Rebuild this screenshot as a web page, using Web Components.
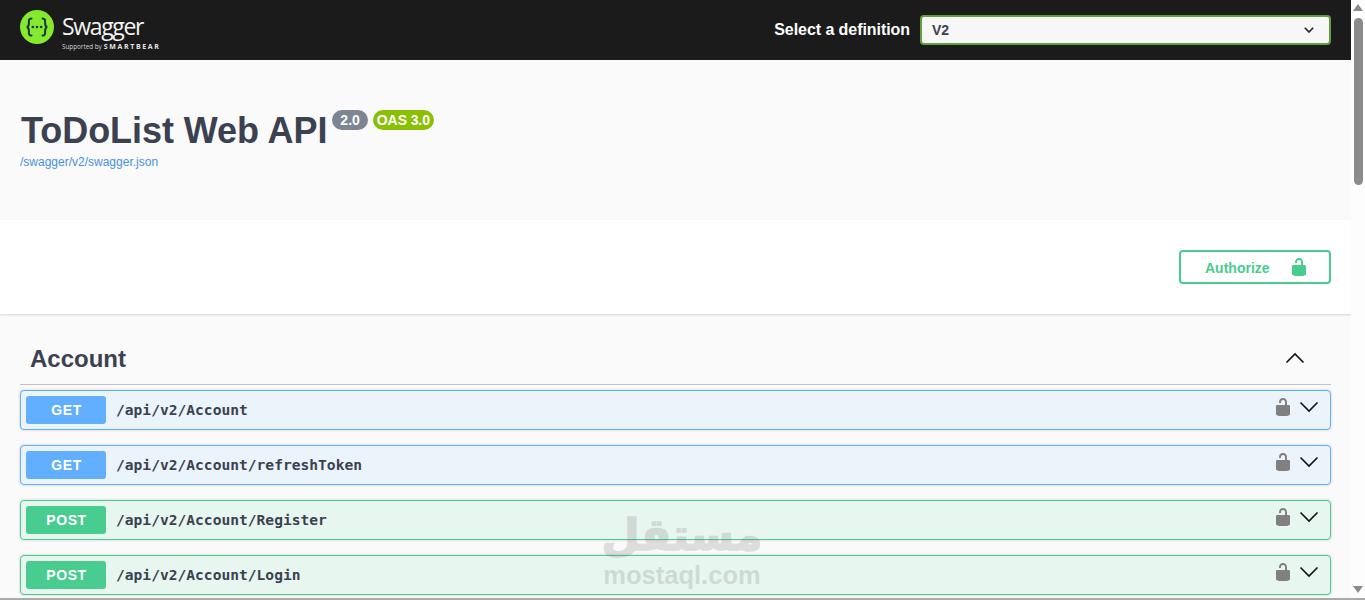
<!DOCTYPE html>
<html><head><meta charset="utf-8">
<style>
html,body{margin:0;padding:0;height:600px;overflow:hidden;background:#fff;font-family:"Liberation Sans",Arial,sans-serif}
</style></head><body>
<sw-app>
  <sw-topbar></sw-topbar>
  <sw-info></sw-info>
  <sw-scheme></sw-scheme>
  <sw-tag name="Account">
    <sw-op method="GET" path="/api/v2/Account"></sw-op>
    <sw-op method="GET" path="/api/v2/Account/refreshToken"></sw-op>
    <sw-op method="POST" path="/api/v2/Account/Register"></sw-op>
    <sw-op method="POST" path="/api/v2/Account/Login"></sw-op>
  </sw-tag>
</sw-app>
<script>
const LOCK='M15.8 8H14V5.6C14 2.703 12.665 1 10 1 7.334 1 6 2.703 6 5.6V6h2v-.801C8 3.754 8.797 3 10 3c1.203 0 2 .754 2 2.199V8H4c-.553 0-1 .646-1 1.199V17c0 .549.428 1.139.951 1.307l1.197.387C5.672 18.861 6.55 19 7.1 19h5.8c.549 0 1.428-.139 1.951-.307l1.196-.387c.524-.167.953-.757.953-1.306V9.199C17 8.646 16.352 8 15.8 8z';
function def(name,html){
  customElements.define(name,class extends HTMLElement{
    connectedCallback(){
      if(this.shadowRoot)return;
      const r=this.attachShadow({mode:'open'});
      r.innerHTML=typeof html==='function'?html(this):html;
    }
  });
}
def('sw-app',`<style>
:host{display:grid;grid-template-columns:1351px 14px;height:600px;position:relative;overflow:hidden;box-sizing:border-box;border-bottom:2px solid #a9a9a9}
.main{min-width:0;height:598px;overflow:hidden}
.bar{display:flex;flex-direction:column;align-items:center;background:#fdfdfd;padding-top:4px;box-sizing:border-box}
.up{width:0;height:0;border:5px solid transparent;border-top:0;border-bottom:7px solid #8a8a8a}
.thumb{width:9px;height:167px;margin-top:7px;background:#8b8b8b;border-radius:5px}
.sp{flex:1}
.dn{width:0;height:0;border:5px solid transparent;border-bottom:0;border-top:7px solid #8a8a8a;margin-bottom:5px}
.wm{position:absolute;left:594px;top:508px;width:176px;display:flex;flex-direction:column;align-items:center;color:#6e6e6e;opacity:.2;pointer-events:none}
.ar{font:700 44px/54px "DejaVu Sans",sans-serif;white-space:nowrap;height:54px;-webkit-text-stroke:1.500px #6e6e6e}
.en{font:700 25.500px/26px "Liberation Sans",sans-serif;white-space:nowrap}
</style><div class="main"><slot></slot></div>
<div class="bar"><div class="up"></div><div class="thumb"></div><div class="sp"></div><div class="dn"></div></div>
<div class="wm"><div class="ar" lang="ar" dir="rtl">مستقل</div><div class="en">mostaql.com</div></div>`);

def('sw-topbar',`<style>
:host{display:flex;align-items:center;justify-content:space-between;height:60px;background:#1b1b1b;padding:0 20px;box-sizing:border-box}
.logo{display:flex;align-items:flex-start;gap:8px;height:60px;padding-top:10px;box-sizing:border-box}
.txt{color:#f3f3f3;display:flex;flex-direction:column}
.name{font:400 23px/24px "Open Sans",sans-serif;letter-spacing:-1.350px;margin-top:4px;height:26px}
.sub{display:flex;align-items:baseline;gap:2px;margin-top:2px;white-space:nowrap}
.s1{font:400 6.300px/9px "Open Sans",sans-serif;color:#d5d5d5}
.s2{font:700 7px/9px "Open Sans",sans-serif;letter-spacing:1.650px;color:#e4e4e4}
.form{display:flex;align-items:center;gap:10px}
label{color:#fff;font:700 16px/20px "Liberation Sans",sans-serif;letter-spacing:-.06px}
.sel{width:411px;height:30px;box-sizing:border-box;border:2px solid #62a03f;border-radius:4px;background:#f7f7f7;display:flex;align-items:center;justify-content:space-between;padding:0 15px 0 10px;color:#3b4151;font:700 14px "Liberation Sans",sans-serif}
</style>
<div class="logo">
<svg width="34" height="34" viewBox="0 0 34 34"><circle cx="17" cy="17" r="17" fill="#85ea2d"/>
<g fill="none" stroke="#173646" stroke-width="2" stroke-linecap="round"><path d="M11.5 8.5c-3 0-2.600 2-2.600 4.500 0 2.500-.8 3.700-2.100 4 1.300.3 2.100 1.500 2.100 4 0 2.500-.4 4.500 2.600 4.500"/><path d="M22.500 8.500c3 0 2.600 2 2.600 4.500 0 2.500.8 3.700 2.100 4-1.300.3-2.100 1.500-2.100 4 0 2.500.4 4.500-2.600 4.500"/></g>
<g fill="#173646"><circle cx="12.800" cy="17" r="1.300"/><circle cx="17" cy="17" r="1.300"/><circle cx="21.200" cy="17" r="1.300"/></g></svg>
<div class="txt"><div class="name">Swagger</div><div class="sub"><span class="s1">Supported by</span><span class="s2">SMARTBEAR</span></div></div>
</div>
<div class="form"><label>Select a definition</label>
<div class="sel"><span>V2</span><svg width="10" height="6" viewBox="0 0 10 6"><path d="M.8.8L5 5l4.200-4.200" fill="none" stroke="#1f1f1f" stroke-width="1.600"/></svg></div></div>`);

def('sw-info',`<style>
:host{display:block;height:160px;background:#fafafa;padding:50px 20px 0;box-sizing:border-box;color:#3b4151}
.t{display:flex;align-items:flex-start;gap:5px;height:42px}
h1{margin:1px 0 0 1px;font:700 36px/40px "Liberation Sans",sans-serif;color:#3b4151;white-space:nowrap;letter-spacing:-.06px}
.b{height:20px;border-radius:57px;color:#fff;font:700 14px/20px "Liberation Sans",sans-serif;padding:0 4px;white-space:nowrap}
.v{background:#7d8492;padding:0 8px}
.o{background:#89bf04;letter-spacing:-.1px}
a{display:block;margin-top:2px;font:400 12px/16px "Liberation Sans",sans-serif;color:#4990e2;text-decoration:none}
</style><div class="t"><h1>ToDoList Web API</h1><span class="b v">2.0</span><span class="b o">OAS 3.0</span></div>
<a href="#">/swagger/v2/swagger.json</a>`);

def('sw-scheme',`<style>
:host{display:flex;justify-content:flex-end;align-items:flex-start;height:94px;background:#fff;padding:30px 20px 0;box-sizing:border-box;box-shadow:0 1px 2px rgba(0,0,0,.15);position:relative}
.btn{width:152px;height:34px;box-sizing:border-box;border:2px solid #49cc90;border-radius:4px;display:flex;align-items:center;padding-left:24px;color:#49cc90;font:700 14px "Liberation Sans",sans-serif}
span{width:84px;padding-top:2px}
svg{display:block}
</style><div class="btn"><span>Authorize</span><svg width="20" height="20" viewBox="0 0 20 20"><path fill="#49cc90" d="${LOCK}"/></svg></div>`);

def('sw-tag',h=>`<style>
:host{display:block;background:#fafafa;padding:0 20px;height:284px;box-sizing:border-box}
.h{height:71px;box-sizing:border-box;border-bottom:1px solid rgba(59,65,81,.3);display:flex;align-items:center;justify-content:space-between;padding:20px 26px 0 10px;margin-bottom:5px}
h3{margin:0;font:700 24px/30px "Liberation Sans",sans-serif;color:#3b4151}
svg{display:block;margin-top:-3px}
::slotted(sw-op){margin-bottom:15px}
</style><div class="h"><h3>${h.getAttribute('name')}</h3><svg width="20" height="12" viewBox="0 0 20 12"><path d="M1.500 10.500L10 2l8.500 8.500" fill="none" stroke="#111" stroke-width="1.600"/></svg></div><slot></slot>`);

def('sw-op',h=>{
 const m=h.getAttribute('method');
 const c=m==='GET'?['#61affe','#ebf3fb']:['#49cc90','#e8f6f0'];
 return `<style>
:host{display:flex;height:40px;box-sizing:border-box;border:1px solid ${c[0]};border-radius:4px;background:${c[1]};align-items:center;padding:0 5px;box-shadow:0 0 3px rgba(0,0,0,.19)}
.m{width:80px;height:28px;box-sizing:border-box;padding-left:1px;background:${c[0]};border-radius:3px;color:#fff;font:700 14px/28px "Liberation Sans",sans-serif;letter-spacing:.6px;text-align:center;flex:none}
.p{flex:1;padding-left:10px;font:700 14.600px/20px "DejaVu Sans Mono",monospace;color:#3b4151;white-space:nowrap}
.r{display:flex;align-items:flex-start;margin-top:-6px;gap:6px;padding-right:6px}
svg{display:block}
</style><span class="m">${m}</span><span class="p">${h.getAttribute('path')}</span>
<span class="r"><svg width="20" height="20" viewBox="0 0 20 20"><path fill="#808080" d="${LOCK}"/></svg><svg width="20" height="20" viewBox="0 0 20 20"><path d="M1.500 5.500L10 14l8.500-8.500" fill="none" stroke="#111" stroke-width="1.600"/></svg></span>`;
});
</script>
</body></html>
